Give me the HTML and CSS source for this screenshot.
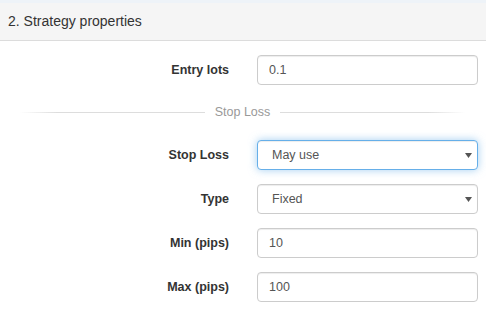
FILE: index.html
```html
<!DOCTYPE html>
<html lang="en">
<head>
    <meta charset="UTF-8">
    <title>Strategy properties</title>
    <link rel="stylesheet" href="styles.css">
</head>
<body>
    <div class="panel">
        <div class="panel-heading">2. Strategy properties</div>

        <div class="panel-body">
            <div class="form-row">
                <label class="form-label">Entry lots</label>
                <input class="form-control" type="text" value="0.1">
            </div>

            <div class="divider"><span>Stop Loss</span></div>

            <div class="form-row">
                <label class="form-label">Stop Loss</label>
                <div class="select-wrap">
                    <select class="form-control focused">
                        <option>May use</option>
                        <option>Always use</option>
                        <option>Do not use</option>
                    </select>
                    <svg class="caret" width="7" height="5" viewBox="0 0 7 5"><path d="M0 0h7L3.5 5z" fill="#555"/></svg>
                </div>
            </div>

            <div class="form-row">
                <label class="form-label">Type</label>
                <div class="select-wrap">
                    <select class="form-control">
                        <option>Fixed</option>
                        <option>Variable</option>
                    </select>
                    <svg class="caret" width="7" height="5" viewBox="0 0 7 5"><path d="M0 0h7L3.5 5z" fill="#555"/></svg>
                </div>
            </div>

            <div class="form-row">
                <label class="form-label">Min (pips)</label>
                <input class="form-control" type="text" value="10">
            </div>

            <div class="form-row">
                <label class="form-label">Max (pips)</label>
                <input class="form-control" type="text" value="100">
            </div>
        </div>
    </div>
</body>
</html>
```

FILE: styles.css
```css
body {
    margin: 0;
    font-family: "Liberation Sans", Arial, sans-serif;
    color: #333;
    background: #fff;
}
.panel {
    border-top: 3px solid #eef3f8;
}
.panel-heading {
    background: #f5f5f5;
    border-bottom: 1px solid #dcdcdc;
    padding: 8px 8px 9px;
    font-size: 14px;
    line-height: 20px;
}
.panel-body {
    padding: 14px 8px 0 0;
}
.form-row {
    display: grid;
    grid-template-columns: 229px 1fr;
    column-gap: 28px;
    align-items: center;
    margin-bottom: 14px;
}
.form-label {
    text-align: right;
    font-weight: bold;
    font-size: 12.5px;
}
.form-control {
    display: block;
    box-sizing: border-box;
    width: 100%;
    height: 30px;
    padding: 0 11px;
    font-family: inherit;
    font-size: 12.5px;
    color: #555;
    background: #fff;
    border: 1px solid #ccc;
    border-radius: 4px;
    box-shadow: inset 0 1px 1px rgba(0,0,0,0.075);
    outline: none;
}
select.form-control {
    appearance: none;
    -webkit-appearance: none;
    padding-left: 14px;
}
.focused {
    border-color: #66afe9;
    box-shadow: inset 0 1px 1px rgba(0,0,0,0.075), 0 0 8px rgba(102,175,233,0.6);
}
.select-wrap {
    position: relative;
}
.caret {
    position: absolute;
    right: 6px;
    top: 13px;
}
.divider {
    display: flex;
    align-items: center;
    gap: 10px;
    margin: 18px 0 19px 20px;
    padding-right: 13px;
    font-size: 12.5px;
    line-height: 18px;
    color: #999;
}
.divider::before,
.divider::after {
    content: "";
    flex: 1;
    height: 1px;
}
.divider::before {
    background: linear-gradient(to right, rgba(221,221,221,0), #ddd 20%);
}
.divider::after {
    background: linear-gradient(to left, rgba(221,221,221,0), #ddd 20%);
}
```
